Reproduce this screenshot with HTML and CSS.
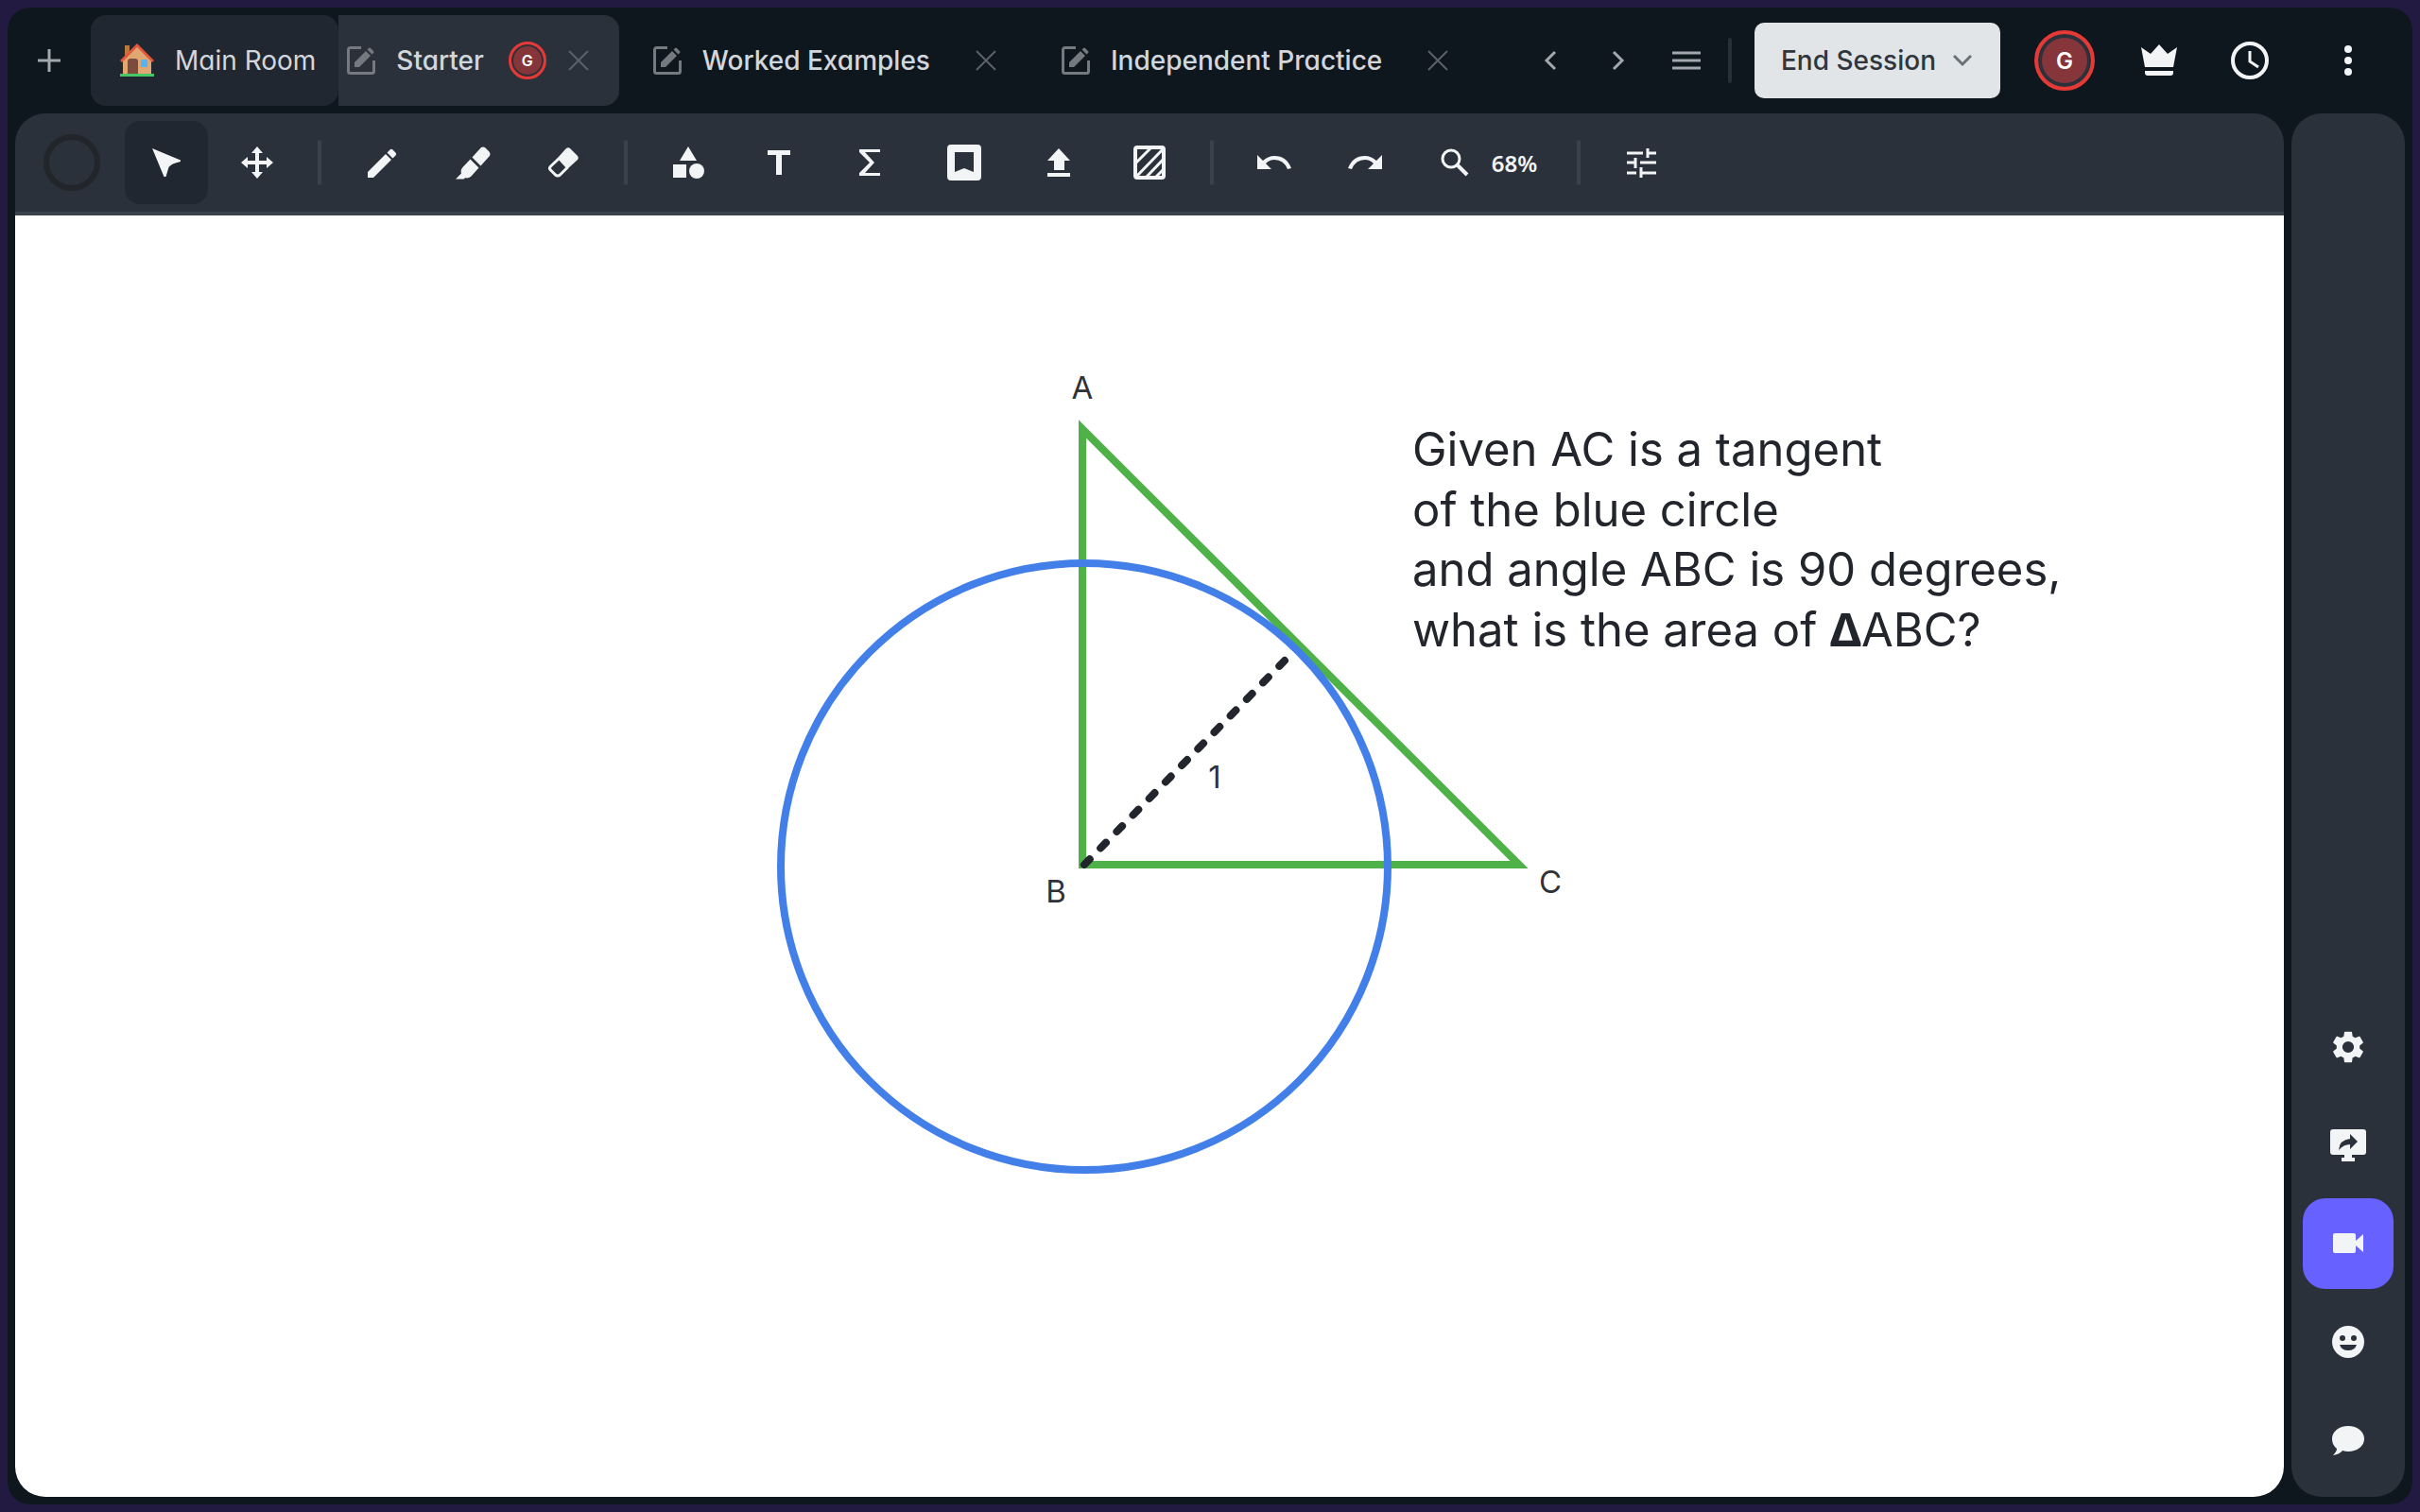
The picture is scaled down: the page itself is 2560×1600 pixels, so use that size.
FILE: index.html
```
<!DOCTYPE html>
<html lang="en">

<head>
    <meta charset="UTF-8">
    <meta name="viewport" content="width=device-width, initial-scale=1.0">
    <title>Starter</title>
    <link rel="stylesheet" href="styles.css">
</head>

<body>
    <!-- Shared icons -->
    <svg class="sprite" aria-hidden="true">
        <symbol id="icon-edit" viewBox="0 0 30 30">
            <path d="M15 1.5H3.500a2 2 0 0 0-2 2v23a2 2 0 0 0 2 2h23a2 2 0 0 0 2-2V15" fill="none" stroke="currentColor" stroke-width="3" />
            <path d="M8 17v5h5L25 10l-5-5zM21.500 3.500l5 5 1.500-1.500q1-1 0-2l-3-3q-1-1-2 0z" fill="currentColor" />
        </symbol>
        <symbol id="icon-close" viewBox="0 0 24 24">
            <path d="M2 2l20 20M22 2L2 22" fill="none" stroke="currentColor" stroke-width="2" />
        </symbol>
    </svg>

    <div class="app">
        <header class="topbar">
            <button class="add-tab" aria-label="Add room">
                <svg width="24" height="24" viewBox="0 0 24 24" fill="none" stroke="currentColor" stroke-width="3">
                    <path d="M12 0v24M0 12h24" />
                </svg>
            </button>
            <nav class="tabs">
                <div class="tab tab-main">
                    <svg width="36" height="36" viewBox="0 0 36 36" aria-hidden="true">
                        <path d="M5 2h5v12H5z" fill="#b9793f" />
                        <path d="M3 16L18 2l15 14v17H3z" fill="#e0a773" />
                        <path d="M0 18L18 0l18 18-2 2L18 4 2 20z" fill="#e4573a" />
                        <path d="M8 33V19q0-3 3-3h5q3 0 3 3v14z" fill="#7b4b3f" />
                        <path d="M22 17h7v8h-7z" fill="#55b4f5" />
                        <path d="M0 32h36v3H0z" fill="#45c765" />
                    </svg>
                    <a href="#main">Main Room</a>
                </div>
                <div class="tab tab-active">
                    <svg class="tab-icon"><use href="#icon-edit" /></svg>
                    <a href="#starter">Starter</a>
                    <span class="avatar avatar-small">G</span>
                    <button class="close" aria-label="Close Starter"><svg><use href="#icon-close" /></svg></button>
                </div>
                <div class="tab">
                    <svg class="tab-icon"><use href="#icon-edit" /></svg>
                    <a href="#worked">Worked Examples</a>
                    <button class="close" aria-label="Close Worked Examples"><svg><use href="#icon-close" /></svg></button>
                </div>
                <div class="tab">
                    <svg class="tab-icon"><use href="#icon-edit" /></svg>
                    <a href="#independent">Independent Practice</a>
                    <button class="close" aria-label="Close Independent Practice"><svg><use href="#icon-close" /></svg></button>
                </div>
            </nav>
            <div class="tab-nav">
                <button aria-label="Previous tab">
                    <svg width="24" height="24" viewBox="0 0 24 24" fill="none" stroke="currentColor" stroke-width="3"><path d="M17 3L8 12l9 9" /></svg>
                </button>
                <button aria-label="Next tab">
                    <svg width="24" height="24" viewBox="0 0 24 24" fill="none" stroke="currentColor" stroke-width="3"><path d="M7 3l9 9-9 9" /></svg>
                </button>
                <button aria-label="All tabs">
                    <svg width="30" height="24" viewBox="0 0 30 24" fill="none" stroke="currentColor" stroke-width="3"><path d="M0 4h30M0 12h30M0 20h30" /></svg>
                </button>
            </div>
            <span class="divider"></span>
            <button class="end-session">
                End Session
                <svg width="20" height="20" viewBox="0 0 20 20" fill="none" stroke="currentColor" stroke-width="3"><path d="M1 5l9 9 9-9" /></svg>
            </button>
            <div class="account">
                <button class="profile" aria-label="Profile"><span class="avatar">G</span></button>
                <button aria-label="Leader">
                    <svg width="38" height="34" viewBox="0 0 38 34" fill="currentColor">
                        <path d="M4 24L0 3l10 7 9-10 9 10 10-7-4 21zM4 28h30v2q0 3-3 3H7q-3 0-3-3z" />
                    </svg>
                </button>
                <button aria-label="Session time">
                    <svg width="40" height="40" viewBox="0 0 40 40" fill="none" stroke="currentColor">
                        <circle cx="20" cy="20" r="18" stroke-width="4" />
                        <path d="M20 10v11l9 6" stroke-width="3" />
                    </svg>
                </button>
                <button class="more" aria-label="More">
                    <svg width="8" height="32" viewBox="0 0 8 32" fill="currentColor">
                        <circle cx="4" cy="4" r="4" /><circle cx="4" cy="16" r="4" /><circle cx="4" cy="28" r="4" />
                    </svg>
                </button>
            </div>
        </header>

        <div class="workspace">
            <main class="board">
                <div class="toolbar">
                    <button class="color" aria-label="Colour"><span class="swatch"></span></button>
                    <button class="selected" aria-label="Select">
                        <svg width="30" height="31" viewBox="0 0 30 31" fill="currentColor"><path d="M0 0l30 12.500v1.500q-10 2-12.500 6L14.500 30h-2z" /></svg>
                    </button>
                    <button aria-label="Pan">
                        <svg width="34" height="34" viewBox="0 0 34 34" fill="currentColor">
                            <path d="M17 0l6 7h-4v8h8v-4l7 6-7 6v-4h-8v8h4l-6 7-6-7h4v-8H7v4l-7-6 7-6v4h8V7h-4z" />
                        </svg>
                    </button>
                    <span class="divider"></span>
                    <button aria-label="Pen">
                        <svg width="31" height="31" viewBox="0 0 31 31" fill="currentColor">
                            <path d="M0 25v6h6l19-19-6-6zM20.500 4.500l6 6 3-3q1.500-1.500 0-3l-3-3q-1.500-1.500-3 0z" />
                        </svg>
                    </button>
                    <button aria-label="Highlighter">
                        <svg width="37" height="35" viewBox="0 0 37 35" fill="currentColor">
                            <path d="M15.500 13.500l9 9-8 9q-2 2-5 2l-1-.5-2 1.500H0l6-6q-1-3 1-6zM17.500 11.500l9-10q2.500-2 5 0l4 4q2 2.500 0 5l-9 10z" />
                        </svg>
                    </button>
                    <button aria-label="Eraser">
                        <svg width="32" height="32" viewBox="0 0 32 32">
                            <path d="M11 12l-8.500 8q-2 2 0 4l5 5q2.500 2 5 0l8-8" fill="none" stroke="currentColor" stroke-width="3" />
                            <path d="M18.500 1.500q2.500-2.500 5 0l7 7q2.500 2.500 0 5L20 23 9.500 11.500z" fill="currentColor" />
                        </svg>
                    </button>
                    <span class="divider"></span>
                    <button aria-label="Shapes">
                        <svg width="33" height="34" viewBox="0 0 33 34" fill="currentColor">
                            <path d="M16 0l9 15H7zM0 19h14v14H0z" /><circle cx="25" cy="26" r="8" />
                        </svg>
                    </button>
                    <button aria-label="Text">
                        <svg width="24" height="26" viewBox="0 0 24 26" fill="currentColor"><path d="M0 0h24v5h-9v21H9V5H0z" /></svg>
                    </button>
                    <button aria-label="Equation">
                        <svg width="22" height="28" viewBox="0 0 22 28" fill="currentColor"><path d="M0 0h22v3H6l10 11L6 25h16v3H0v-3l11-11L0 3z" /></svg>
                    </button>
                    <button class="library" aria-label="Library">
                        <svg width="36" height="38" viewBox="0 0 36 38" fill="currentColor" fill-rule="evenodd">
                            <path d="M4 0h28q4 0 4 4v30q0 4-4 4H4q-4 0-4-4V4q0-4 4-4zM8 8v21l10-4 10 4V8z" />
                        </svg>
                    </button>
                    <button aria-label="Upload">
                        <svg width="25" height="30" viewBox="0 0 25 30" fill="currentColor"><path d="M12 0l12 13h-6v10H7V13H0zM0 26h24v4H0z" /></svg>
                    </button>
                    <button aria-label="Background">
                        <svg width="34" height="36" viewBox="0 0 34 36" fill="none" stroke="currentColor" stroke-width="3">
                            <rect x="2" y="2" width="30" height="32" rx="2" stroke-width="4" />
                            <path d="M2 19L18 3M3 33L32 3M14 33L33 13M24 33l9-9" />
                        </svg>
                    </button>
                    <span class="divider"></span>
                    <button aria-label="Undo">
                        <svg width="36" height="16" viewBox="0 0 36 16" fill="currentColor"><path d="M0 0l6 6q6-5 12-5 13 0 18 13l-4 1q-4-10-14-10-5 0-9 4l6 6H0z" /></svg>
                    </button>
                    <button aria-label="Redo">
                        <svg width="36" height="16" viewBox="0 0 36 16" fill="currentColor"><path d="M36 0l-6 6q-6-5-12-5Q5 1 0 14l4 1Q8 5 18 5q5 0 9 4l-6 6h15z" /></svg>
                    </button>
                    <button class="zoom">
                        <svg width="30" height="30" viewBox="0 0 30 30" fill="none" stroke="currentColor">
                            <circle cx="11" cy="11" r="9" stroke-width="3" /><path d="M17 17l11 11" stroke-width="4" />
                        </svg>
                        68%
                    </button>
                    <span class="divider"></span>
                    <button aria-label="Settings">
                        <svg width="31" height="31" viewBox="0 0 31 31" fill="none" stroke="currentColor" stroke-width="3">
                            <path d="M0 5h17M22 0v10M22 5h9M0 15h10M9 10v11M14 15h17M0 26h10M15 20v11M15 26h16" />
                        </svg>
                    </button>
                </div>

                <svg class="canvas" viewBox="0 0 2400 1356" role="img" aria-label="Circle and tangent problem">
                    <path class="triangle" d="M1129 226v461h462z" />
                    <circle class="circle" cx="1131" cy="689" r="321" />
                    <line class="radius" x1="1131" y1="687" x2="1343" y2="471" pathLength="296" />
                    <g class="labels">
                        <text x="1129" y="194" text-anchor="middle">A</text>
                        <text x="1101" y="727" text-anchor="middle">B</text>
                        <text x="1624" y="717" text-anchor="middle">C</text>
                        <text x="1269" y="606" text-anchor="middle">1</text>
                    </g>
                    <text class="question">
                        <tspan x="1478" y="265">Given AC is a tangent</tspan>
                        <tspan x="1478" y="329">of the blue circle</tspan>
                        <tspan x="1478" y="392">and angle ABC is 90 degrees,</tspan>
                        <tspan x="1478" y="456">what is the area of <tspan class="delta">Δ</tspan>ABC?</tspan>
                    </text>
                </svg>
            </main>

            <aside class="sidebar">
                <button aria-label="Settings">
                    <svg width="34" height="34" viewBox="2 2 20 20" fill="currentColor">
                        <path d="M19.140 12.940c.04-.3.06-.61.06-.94 0-.32-.02-.64-.07-.94l2.030-1.580a.49.49 0 0 0 .12-.61l-1.920-3.320a.49.49 0 0 0-.59-.22l-2.390.96c-.5-.38-1.030-.7-1.620-.94l-.36-2.540a.48.48 0 0 0-.48-.41h-3.840a.48.48 0 0 0-.47.41l-.36 2.540c-.59.24-1.130.57-1.620.94l-2.390-.96a.49.49 0 0 0-.59.22L2.740 8.870a.48.48 0 0 0 .12.61l2.030 1.580c-.05.3-.09.63-.09.94s.02.64.07.94l-2.030 1.580a.49.49 0 0 0-.12.61l1.920 3.320c.12.22.37.29.59.22l2.390-.96c.5.38 1.030.7 1.620.94l.36 2.540c.05.24.24.41.48.41h3.840c.24 0 .44-.17.47-.41l.36-2.540c.59-.24 1.130-.56 1.620-.94l2.390.96c.22.08.47 0 .59-.22l1.920-3.320a.48.48 0 0 0-.12-.61l-2.010-1.580zM12 15.600a3.600 3.600 0 1 1 0-7.200 3.600 3.600 0 0 1 0 7.200z" />
                    </svg>
                </button>
                <button aria-label="Share screen">
                    <svg width="38" height="34" viewBox="0 0 38 34" fill="currentColor" fill-rule="evenodd">
                        <path d="M3 0h32q3 0 3 3v21q0 3-3 3H23v3h3v4H12v-4h3v-3H3q-3 0-3-3V3q0-3 3-3zM21 5v5Q10 11 9 22q5-6 12-6v5l8-8z" />
                    </svg>
                </button>
                <button class="active" aria-label="Video">
                    <svg width="32" height="22" viewBox="0 0 32 22" fill="currentColor"><path d="M2 0h20q2 0 2 2v6l8-7v19l-8-7v6q0 2-2 2H2q-2 0-2-2V2q0-2 2-2z" /></svg>
                </button>
                <button aria-label="Reactions">
                    <svg width="34" height="34" viewBox="0 0 34 34" fill="currentColor" fill-rule="evenodd">
                        <path d="M17 0a17 17 0 0 1 0 34 17 17 0 0 1 0-34zM11 10a3 3 0 0 0 0 6 3 3 0 0 0 0-6zM23 10a3 3 0 0 0 0 6 3 3 0 0 0 0-6zM8 20q2 6 9 6t9-6z" />
                    </svg>
                </button>
                <button aria-label="Chat">
                    <svg width="34" height="31" viewBox="0 0 34 31" fill="currentColor">
                        <path d="M17 0c10 0 17 6 17 13.500S27 27 17 27q-3 0-6-1-3 4-10 5 4-4 4-7-5-4-5-10.500C0 6 7 0 17 0z" />
                    </svg>
                </button>
            </aside>
        </div>
    </div>
</body>

</html>
```
FILE: styles.css
```
* {
    box-sizing: border-box;
}

body {
    margin: 0;
    padding: 8px;
    height: 100vh;
    background-color: #221a40;
    font-family: Inter, sans-serif;
    font-size: 28px;
    color: #d3d7dc;
}

button {
    display: flex;
    align-items: center;
    justify-content: center;
    padding: 0;
    border: none;
    background: none;
    color: inherit;
    font: inherit;
    cursor: pointer;
}

a {
    color: inherit;
    text-decoration: none;
}

svg {
    display: block;
    flex-shrink: 0;
}

.sprite {
    position: absolute;
    width: 0;
    height: 0;
}

.app {
    display: flex;
    flex-direction: column;
    height: 100%;
    background-color: #0f171e;
    border-radius: 24px;
}

.divider {
    flex-shrink: 0;
    width: 4px;
    height: 48px;
    border-radius: 2px;
    background-color: #39424b;
}

/* Top bar */
.topbar {
    display: flex;
    align-items: center;
    height: 112px;
    padding-right: 8px;
    font-feature-settings: "cv11";
}

.add-tab {
    width: 88px;
    height: 96px;
    color: #a3a8af;
}

.tabs {
    display: flex;
    flex: 1;
    min-width: 0;
}

.tab {
    display: flex;
    align-items: center;
    height: 96px;
    padding: 0 32px 0 36px;
    gap: 22px;
    border-radius: 16px;
    font-weight: 500;
    white-space: nowrap;
}

.tab-main {
    padding: 0 24px 0 31px;
    background-color: #202730;
    font-weight: 400;
}

.tab-active {
    padding: 0 31px 0 9px;
    border-radius: 0 16px 16px 0;
    background-color: #2a313a;
}

.tab-icon {
    width: 30px;
    height: 30px;
    color: #757a81;
}

.close {
    width: 24px;
    height: 24px;
    color: #5b6168;
}

.tab .close {
    margin-left: 25px;
}

.tab-active .close {
    margin-left: 0;
}

.close svg {
    width: 24px;
    height: 24px;
}

.avatar {
    display: flex;
    align-items: center;
    justify-content: center;
    width: 64px;
    height: 64px;
    border: 4px solid #e53935;
    border-radius: 50%;
    background-color: #86353a;
    box-shadow: inset 0 0 0 4px #2a313a;
    color: #fff;
    font-size: 24px;
    font-weight: 600;
}

.avatar-small {
    width: 40px;
    height: 40px;
    margin-left: 4px;
    border-width: 3px;
    box-shadow: inset 0 0 0 2px #2a313a;
    font-size: 16px;
}

.tab-nav {
    display: flex;
    margin-right: 8px;
    color: #a3a8af;
}

.tab-nav button {
    width: 72px;
    height: 72px;
}

.topbar .divider {
    background-color: #272f37;
}

.end-session {
    gap: 18px;
    height: 80px;
    margin: 0 20px 0 24px;
    padding: 0 30px 0 28px;
    border-radius: 10px;
    background-color: #e1e5e8;
    color: #30363c;
    font-weight: 500;
    white-space: nowrap;
}

.end-session svg {
    color: #6b7075;
}

.account {
    display: flex;
    color: #f3f4f6;
}

.account button {
    width: 96px;
    height: 96px;
}

.account .profile {
    margin-right: 4px;
}

.account .more {
    width: 112px;
    margin-right: 4px;
}

/* Board and toolbar */
.workspace {
    display: flex;
    flex: 1;
    gap: 8px;
    min-height: 0;
    padding: 0 8px 8px;
}

.board {
    display: flex;
    flex: 1;
    flex-direction: column;
    overflow: hidden;
    border-radius: 32px;
}

.toolbar {
    display: flex;
    align-items: center;
    gap: 8px;
    height: 108px;
    padding: 0 16px;
    border-bottom: 4px solid #39424a;
    background-color: #2a313a;
    color: #f3f4f6;
}

.toolbar button {
    width: 88px;
    height: 88px;
    border-radius: 16px;
}

.toolbar .color {
    margin-right: 4px;
}

.swatch {
    width: 60px;
    height: 60px;
    border: 6px solid #222529;
    border-radius: 50%;
}

.toolbar .selected {
    background-color: #202730;
}

.toolbar .library {
    width: 96px;
}

.toolbar .zoom {
    gap: 24px;
    width: 152px;
    padding-left: 6px;
    font-family: "Noto Sans", sans-serif;
    font-size: 24px;
    font-weight: 600;
}

.toolbar .divider {
    margin: 0 12px;
}

/* Drawing */
.canvas {
    flex: 1;
    width: 100%;
    min-height: 0;
    background-color: #fff;
    fill: #22252b;
}

.triangle,
.circle,
.radius {
    fill: none;
    stroke-width: 8;
}

.triangle {
    stroke: #4eb248;
}

.circle {
    stroke: #437fe8;
}

.radius {
    stroke: #22252b;
    stroke-dasharray: 8 16;
    stroke-linecap: round;
}

.labels {
    font-size: 33px;
    fill: #2f3237;
}

.question {
    font-size: 49px;
}

.delta {
    font-family: "Noto Sans", sans-serif;
    font-weight: 700;
}

/* Side panel */
.sidebar {
    display: flex;
    flex-direction: column;
    align-items: center;
    justify-content: flex-end;
    gap: 8px;
    width: 120px;
    padding: 12px;
    border-radius: 32px;
    background-color: #2a313a;
    color: #f3f4f6;
}

.sidebar button {
    width: 96px;
    height: 96px;
    border-radius: 24px;
}

.sidebar .active {
    background-color: #6661ff;
}
```
